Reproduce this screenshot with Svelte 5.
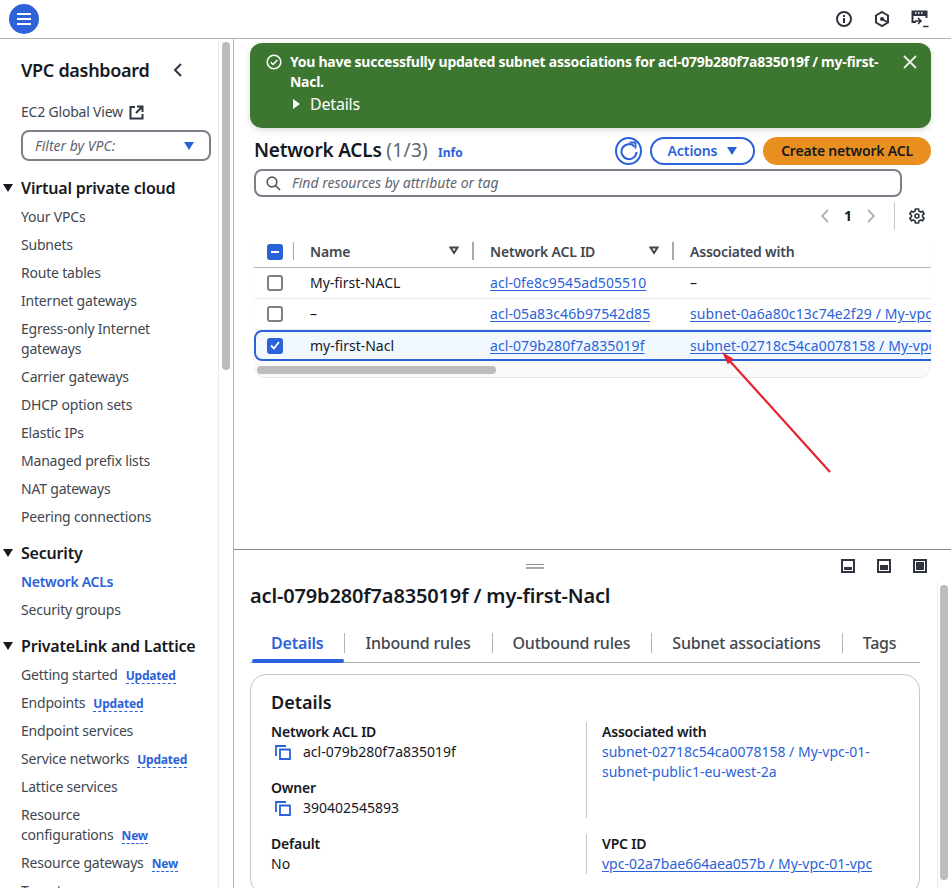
<script>
  const vpc = ['Your VPCs', 'Subnets', 'Route tables', 'Internet gateways', 'Egress-only Internet gateways', 'Carrier gateways', 'DHCP option sets', 'Elastic IPs', 'Managed prefix lists', 'NAT gateways', 'Peering connections'];
  const lattice = [
    { name: 'Getting started', badge: 'Updated' },
    { name: 'Endpoints', badge: 'Updated' },
    { name: 'Endpoint services' },
    { name: 'Service networks', badge: 'Updated' },
    { name: 'Lattice services' },
    { first: 'Resource', name: 'configurations', badge: 'New' },
    { name: 'Resource gateways', badge: 'New' },
    { name: 'Target groups' }
  ];
  const rows = [
    { name: 'My-first-NACL', id: 'acl-0fe8c9545ad505510', assoc: '' },
    { name: '–', id: 'acl-05a83c46b97542d85', assoc: 'subnet-0a6a80c13c74e2f29 / My-vpc-01-subnet-private' },
    { name: 'my-first-Nacl', id: 'acl-079b280f7a835019f', assoc: 'subnet-02718c54ca0078158 / My-vpc-01-subnet-public1', selected: true }
  ];
  const tabs = ['Details', 'Inbound rules', 'Outbound rules', 'Subnet associations', 'Tags'];
</script>

<div class="app">
  <header class="topbar">
    <button class="menu" aria-label="Menu">
      <svg width="16" height="14" viewBox="0 0 16 14"><path d="M1 2h14M1 7h14M1 12h14" stroke="#fff" stroke-width="2"/></svg>
    </button>
    <div class="top-icons">
      <svg width="18" height="18" viewBox="0 0 18 18" fill="none" stroke="#2f3440" stroke-width="2"><circle cx="9" cy="9" r="7"/><path d="M9 8v5M9 5v2"/></svg>
      <svg width="18" height="18" viewBox="0 0 18 18" fill="none" stroke="#2f3440" stroke-width="2"><path d="M9 2l6 3.500v7L9 16l-6-3.500v-7z"/><circle cx="9" cy="9" r="2" fill="#2f3440" stroke="none"/><path d="M9 9l5 3" /></svg>
      <svg width="18" height="18" viewBox="0 0 18 18" fill="none" stroke="#2f3440" stroke-width="2"><path d="M5 12H1.500V1.500h14V8"/><path d="M1 1h15v5H1z" fill="#2f3440" stroke="none"/><path d="M4 3h1.500M7 3h1.500M10 3h1.500" stroke="#fff" stroke-width="1.400"/><path d="M7 8l3 3-3 3M4 11h6M12 16.500h5.500" stroke-width="1.600"/></svg>
    </div>
  </header>

  <div class="body">
    <nav class="sidebar">
      <div class="side-scroll">
        <div class="side-head">
          <h2>VPC dashboard</h2>
          <svg width="12" height="14" viewBox="0 0 12 14" fill="none" stroke="#2f3440" stroke-width="2"><path d="M9 1L3 7l6 6"/></svg>
        </div>
        <div class="global">EC2 Global View
          <svg width="15" height="15" viewBox="0 0 15 15" fill="none" stroke="#2f3440" stroke-width="2"><path d="M6 2H1.500v11.500h12V9M8 1.500h5.500V7M13 2L7 8"/></svg>
        </div>
        <div class="filter"><em>Filter by VPC:</em><span class="caret"></span></div>

        <h3 class="sec"><span class="tri"></span>Virtual private cloud</h3>
        <ul>
          {#each vpc as item}<li>{item}</li>{/each}
        </ul>

        <h3 class="sec"><span class="tri"></span>Security</h3>
        <ul>
          <li class="active">Network ACLs</li>
          <li>Security groups</li>
        </ul>

        <h3 class="sec"><span class="tri"></span>PrivateLink and Lattice</h3>
        <ul>
          {#each lattice as item}
            <li>{#if item.first}{item.first}<br>{/if}{item.name}{#if item.badge}<span class="badge">{item.badge}</span>{/if}</li>
          {/each}
        </ul>
      </div>
      <div class="side-bar"><span></span></div>
    </nav>

    <main class="content">
      <section class="upper">
        <div class="flash">
          <svg class="ok" width="16" height="16" viewBox="0 0 16 16" fill="none" stroke="#fff" stroke-width="1.500"><circle cx="8" cy="8" r="6.800"/><path d="M4.800 8.200l2.300 2.300 4.200-4.500"/></svg>
          <div class="flash-text">
            <strong>You have successfully updated subnet associations for acl-079b280f7a835019f / my-first-Nacl.</strong>
            <div class="flash-details"><span class="tri-r"></span>Details</div>
          </div>
          <svg class="close" width="14" height="14" viewBox="0 0 14 14" stroke="#e9f0e6" stroke-width="1.800"><path d="M1 1l12 12M13 1L1 13"/></svg>
        </div>

        <div class="table-head">
          <h1>Network ACLs <span>(1/3)</span><a class="info" href="#info">Info</a></h1>
          <div class="actions">
            <button class="refresh" aria-label="Refresh">
              <svg width="18" height="20" viewBox="0 0 18 20" fill="none" stroke="#2b62d9" stroke-width="2"><path d="M14.500 5.500A7.500 7.500 0 1 0 16.500 11"/><path d="M9.500 1.500h6v6" stroke-width="1.800"/></svg>
            </button>
            <button class="btn-actions">Actions<span class="caret"></span></button>
            <button class="btn-create">Create network ACL</button>
          </div>
        </div>

        <div class="search">
          <svg width="15" height="15" viewBox="0 0 15 15" fill="none" stroke="#555a63" stroke-width="1.700"><circle cx="6" cy="6" r="4.800"/><path d="M9.500 9.500l4.500 4.500"/></svg>
          <em>Find resources by attribute or tag</em>
        </div>

        <div class="pager">
          <svg width="10" height="14" viewBox="0 0 10 14" fill="none" stroke="#aeb2b8" stroke-width="1.800"><path d="M8 1L2 7l6 6"/></svg>
          <b>1</b>
          <svg width="10" height="14" viewBox="0 0 10 14" fill="none" stroke="#aeb2b8" stroke-width="1.800"><path d="M2 1l6 6-6 6"/></svg>
          <i class="pager-sep"></i>
          <svg width="16" height="16" viewBox="0 0 16 16" fill="none" stroke="#2f3440" stroke-width="1.600"><path d="M6.500 1h3l.4 2 1.700 1 2-.7 1.500 2.600-1.600 1.300v1.600l1.600 1.300-1.500 2.600-2-.7-1.700 1-.4 2h-3l-.4-2-1.700-1-2 .7L.9 10.100l1.600-1.300V7.200L.9 5.900l1.500-2.600 2 .7 1.700-1z"/><circle cx="8" cy="8" r="2"/></svg>
        </div>

        <div class="table">
          <div class="thead row">
            <div class="c-check"><span class="cb on"><svg width="8" height="2" viewBox="0 0 8 2"><path d="M0 1h8" stroke="#fff" stroke-width="2"/></svg></span><i></i></div>
            <div class="c-name">Name
              <svg class="sort" width="10" height="9" viewBox="0 0 10 9" fill="none" stroke="#414750" stroke-width="2"><path d="M1.500 1.500h7L5 7z"/></svg><i></i></div>
            <div class="c-id">Network ACL ID
              <svg class="sort" width="10" height="9" viewBox="0 0 10 9" fill="none" stroke="#414750" stroke-width="2"><path d="M1.500 1.500h7L5 7z"/></svg><i></i></div>
            <div class="c-assoc">Associated with</div>
          </div>
          {#each rows as r}
            <div class="row tr" class:selected={r.selected}>
              <div class="c-check"><span class="cb" class:on={r.selected}>{#if r.selected}<svg width="10" height="9" viewBox="0 0 10 9" fill="none" stroke="#fff" stroke-width="1.800"><path d="M1 4.500l3 3 5-6.500"/></svg>{/if}</span></div>
              <div class="c-name">{r.name}</div>
              <div class="c-id"><a href="#acl">{r.id}</a></div>
              <div class="c-assoc">{#if r.assoc}<a href="#subnet">{r.assoc}</a>{:else}–{/if}</div>
            </div>
          {/each}
          <div class="hscroll"><span></span></div>
        </div>

        <svg class="arrow" width="120" height="130" viewBox="0 0 120 130" fill="none" stroke="#e5232f" stroke-width="2.200"><path d="M112 123L10 10"/><path d="M4 3l11.700 6.900-5.900 5.400z" fill="#e5232f" stroke="none"/></svg>
      </section>

      <section class="lower">
        <div class="split-bar">
          <span class="grip"></span>
          <div class="split-icons">
            <span class="pane p1"></span><span class="pane p2"></span><span class="pane p3"></span>
          </div>
        </div>
        <div class="lower-body">
          <div class="lower-main">
            <h2 class="title">acl-079b280f7a835019f / my-first-Nacl</h2>
            <div class="tabs">
              {#each tabs as t, i}
                <div class="tab" class:current={i === 0}>{t}</div>
              {/each}
            </div>
            <div class="card">
              <h3>Details</h3>
              <div class="grid">
                <div class="col">
                  <div class="field">
                    <div class="label">Network ACL ID</div>
                    <div class="val copy">
                      <svg width="16" height="15" viewBox="0 0 16 15" fill="none" stroke="#2b62d9" stroke-width="1.800"><path d="M1 11V1h10"/><path d="M5 4.500h10v9.500H5z"/></svg>
                      acl-079b280f7a835019f
                    </div>
                  </div>
                  <div class="field">
                    <div class="label">Owner</div>
                    <div class="val copy">
                      <svg width="16" height="15" viewBox="0 0 16 15" fill="none" stroke="#2b62d9" stroke-width="1.800"><path d="M1 11V1h10"/><path d="M5 4.500h10v9.500H5z"/></svg>
                      390402545893
                    </div>
                  </div>
                </div>
                <div class="col ruled">
                  <div class="field">
                    <div class="label">Associated with</div>
                    <div class="val"><span class="blue">subnet-02718c54ca0078158 / My-vpc-01-subnet-public1-eu-west-2a</span></div>
                  </div>
                </div>
                <div class="col">
                  <div class="field">
                    <div class="label">Default</div>
                    <div class="val">No</div>
                  </div>
                </div>
                <div class="col ruled">
                  <div class="field">
                    <div class="label">VPC ID</div>
                    <div class="val"><a href="#vpc">vpc-02a7bae664aea057b / My-vpc-01-vpc</a></div>
                  </div>
                </div>
              </div>
            </div>
          </div>
          <div class="lower-bar"><span></span></div>
        </div>
      </section>
    </main>
  </div>
</div>

<style>
  :global(body) { margin: 0; background: #fff; overflow: hidden; }
  .app {
    width: 951px;
    height: 888px;
    overflow: hidden;
    font-family: "Noto Sans", "Open Sans", sans-serif;
    font-size: 14px;
    line-height: 20px;
    color: #16191f;
    display: flex;
    flex-direction: column;
  }
  a { color: #2b62d9; text-decoration: underline; text-underline-offset: 2px; }
  h1, h2, h3, ul { margin: 0; padding: 0; }
  ul { list-style: none; }
  button { font: inherit; cursor: pointer; }

  .topbar {
    height: 37px;
    flex: none;
    border-bottom: 1px solid #b4b4bb;
    display: flex;
    align-items: center;
    justify-content: space-between;
    padding: 0 22px 1px 9px;
  }
  .menu {
    width: 30px; height: 30px; border-radius: 50%;
    border: 0; padding: 0; background: #2f62d8;
    display: flex; align-items: center; justify-content: center;
  }
  .top-icons { display: flex; gap: 20px; }

  .body { flex: 1; display: flex; min-height: 0; }
  .sidebar {
    width: 233px; flex: none;
    border-right: 1px solid #b4b4bb;
    display: flex;
    overflow: hidden;
  }
  .side-scroll { flex: 1; padding: 19px 0 0 0; min-width: 0; color: #414750; letter-spacing: -0.2px; }
  .side-head {
    display: flex; align-items: center; justify-content: space-between;
    padding: 0 34px 0 21px; height: 24px;
  }
  .side-head h2 { font-size: 18px; font-weight: 600; color: #16191f; line-height: 24px; letter-spacing: -0.3px; }
  .global { display: flex; align-items: center; gap: 6px; padding-left: 21px; margin-top: 20px; }
  .filter {
    margin: 8px 7px 0 21px;
    height: 31px;
    box-sizing: border-box;
    border: 2px solid #7d8089;
    border-radius: 8px;
    display: flex; align-items: center; justify-content: space-between;
    padding: 0 15px 0 12px;
    color: #5f6570;
    letter-spacing: 0;
  }
  .caret {
    width: 0; height: 0;
    border-left: 5px solid transparent; border-right: 5px solid transparent;
    border-top: 8px solid #2b62d9;
  }
  .sec {
    position: relative;
    font-size: 16px; font-weight: 600; line-height: 22px; color: #16191f;
    padding-left: 21px; margin-top: 11px;
    letter-spacing: -0.2px;
  }
  .filter + .sec { margin-top: 16px; }
  .tri {
    position: absolute; left: 3px; top: 7px;
    border-left: 5px solid transparent; border-right: 5px solid transparent;
    border-top: 8px solid #16191f;
  }
  .sidebar ul { margin-top: 4px; }
  .sidebar li { padding: 4px 9px 4px 21px; }
  .sidebar li.active { color: #2b62d9; font-weight: 600; letter-spacing: -0.3px; }
  .badge {
    margin-left: 8px;
    color: #2b62d9; font-size: 12px; font-weight: 700;
    border-bottom: 1px dashed #2b62d9;
    line-height: 14px; display: inline-block;
  }
  .side-bar { width: 14px; flex: none; border-left: 1px solid #e9ebed; }
  .side-bar span { display: block; width: 8px; height: 328px; margin: 3px 0 0 3px; border-radius: 4px; background: #bcbcbc; }

  .content { flex: 1; min-width: 0; display: flex; flex-direction: column; }
  .upper {
    position: relative;
    height: 511px; flex: none;
    border-bottom: 1px solid #87878c;
    padding: 4px 20px 0 16px;
    box-sizing: border-box;
  }
  .flash {
    height: 85px; box-sizing: border-box;
    background: #3d7630; color: #fff;
    border-radius: 12px;
    padding: 9px 14px 0 16px;
    display: flex;
    box-shadow: 0 2px 6px rgba(0,0,0,.15);
  }
  .ok { flex: none; margin: 2px 8px 0 0; }
  .flash-text { flex: 1; }
  .flash-text strong { display: block; font-size: 14px; line-height: 20px; letter-spacing: -0.27px; }
  .flash-details { display: flex; align-items: center; gap: 10px; margin-top: 2px; font-size: 16px; padding-left: 3px; letter-spacing: -0.2px; }
  .tri-r { border-top: 5px solid transparent; border-bottom: 5px solid transparent; border-left: 7px solid #fff; }
  .close { flex: none; margin: 3px 0 0 14px; }

  .table-head { display: flex; align-items: center; justify-content: space-between; height: 28px; margin-top: 9px; padding-left: 4px; }
  .table-head h1 { font-size: 19px; font-weight: 600; line-height: 30px; letter-spacing: -0.2px; }
  .table-head h1 span { font-weight: 400; color: #5f6570; letter-spacing: 0.3px; }
  .info { font-size: 12px; font-weight: 700; margin-left: 10px; text-decoration: none; letter-spacing: 0; }
  .actions { display: flex; align-items: center; gap: 8px; }
  .refresh {
    width: 27px; height: 28px; padding: 0; background: #fff;
    border: 2px solid #2b62d9; border-radius: 50%;
    display: flex; align-items: center; justify-content: center;
  }
  .btn-actions {
    height: 28px; width: 105px; background: #fff; color: #2b62d9; font-weight: 600;
    border: 2px solid #2b62d9; border-radius: 14px;
    display: flex; align-items: center; justify-content: center; gap: 10px; padding: 0;
    letter-spacing: -0.1px;
  }
  .btn-create {
    height: 28px; width: 168px; padding: 0; border: 0; border-radius: 14px;
    background: #e88f1f; color: #16191f; font-weight: 600; letter-spacing: -0.2px;
  }
  .search {
    margin-top: 4px; margin-right: 29px; margin-left: 4px;
    height: 28px; box-sizing: border-box;
    border: 2px solid #7d8089; border-radius: 8px;
    display: flex; align-items: center; gap: 11px; padding: 0 10px;
    color: #5f6570;
  }
  .pager { display: flex; align-items: center; justify-content: flex-end; gap: 14px; height: 30px; margin-top: 4px; padding-right: 6px; }
  .pager b { font-weight: 700; font-size: 14px; }
  .pager-sep { width: 1px; height: 28px; background: #c6c6cd; margin: 0 0 0 4px; }

  .table {
    margin: 5px 0 0 4px;
    border-radius: 0 0 12px 12px;
    overflow: hidden;
    box-shadow: 0 1px 1px rgba(0,0,0,.12);
  }
  .row { display: flex; align-items: center; }
  .row > div { position: relative; height: 100%; display: flex; align-items: center; box-sizing: border-box; white-space: nowrap; }
  .c-check { width: 40px; flex: none; padding-left: 13px; }
  .c-name { width: 180px; flex: none; padding-left: 16px; }
  .c-id { width: 200px; flex: none; padding-left: 16px; }
  .c-assoc { flex: 1; padding-left: 16px; min-width: 0; overflow: hidden; }
  .tr a { letter-spacing: 0.08px; }
  .thead { height: 31px; border-bottom: 1px solid #b4b4bb; font-weight: 600; color: #414750; letter-spacing: -0.2px; }
  .thead i { position: absolute; right: 0; top: 6px; width: 2px; height: 18px; background: #a8a8ae; }
  .thead .c-check i { right: 0; width: 1px; }
  .sort { position: absolute; right: 15px; top: 10px; }
  .tr { height: 31px; border-bottom: 1px solid #e9ebed; box-sizing: border-box; }
  .tr.selected {
    border: 2px solid #2b62d9; border-radius: 8px;
    background: #f1f8ff; margin: 0 -12px 0 0;
  }
  .tr.selected .c-check { padding-left: 11px; width: 38px; }
  .cb {
    width: 16px; height: 16px; box-sizing: border-box;
    border: 2px solid #7d8089; border-radius: 3px;
    display: flex; align-items: center; justify-content: center;
    color: #fff; font-weight: 700;
  }
  .cb.on { background: #2b62d9; border-color: #2b62d9; }
  .hscroll { height: 16px; background: #fafafa; padding-top: 5px; box-sizing: border-box; }
  .hscroll span { display: block; width: 239px; height: 8px; margin-left: 3px; border-radius: 4px; background: #bcbcbc; }
  .arrow { position: absolute; left: 484px; top: 310px; }

  .lower { flex: 1; min-height: 0; display: flex; flex-direction: column; }
  .split-bar { height: 32px; flex: none; position: relative; display: flex; justify-content: flex-end; align-items: center; padding: 0 24px 0 0; }
  .grip {
    position: absolute; left: 292px; top: 14px;
    width: 18px; height: 5px;
    border-top: 1px solid #8d8d94; border-bottom: 2px solid #a8a8ae;
    box-sizing: border-box;
  }
  .split-icons { display: flex; gap: 22px; }
  .pane { width: 14px; height: 14px; box-sizing: border-box; border: 2px solid #2f3440; padding: 1px; display: flex; align-items: flex-end; }
  .pane::after { content: ""; display: block; width: 100%; background: #2f3440; }
  .p1::after { height: 3px; }
  .p2::after { height: 5px; }
  .p3::after { height: 8px; }

  .lower-body { flex: 1; display: flex; min-height: 0; }
  .lower-main { flex: 1; min-width: 0; padding-left: 16px; }
  .title { font-size: 20px; font-weight: 600; line-height: 24px; margin-top: 2px; letter-spacing: -0.15px; white-space: nowrap; }
  .tabs { display: flex; margin-top: 18px; border-bottom: 1px solid #b4b4bb; height: 36px; margin-right: 17px; }
  .tab {
    position: relative; font-size: 16px; font-weight: 500; color: #414750;
    padding: 7px 21px 0; height: 36px; box-sizing: border-box; white-space: nowrap;
    letter-spacing: -0.2px;
  }
  .tab + .tab::before { content: ""; position: absolute; left: 0; top: 7px; width: 1px; height: 20px; background: #b4b4bb; }
  .tab.current { color: #2b62d9; font-weight: 600; }
  .tab.current::after { content: ""; position: absolute; left: 2px; right: 0; bottom: -1px; height: 4px; border-radius: 2px; background: #2b62d9; }
  .card {
    margin: 11px 17px 0 0;
    border: 1px solid #c6c6cd; border-radius: 16px;
    padding: 15px 20px 20px;
  }
  .card h3 { font-size: 18px; font-weight: 600; line-height: 24px; }
  .grid { display: grid; grid-template-columns: 315px 1fr; row-gap: 16px; margin-top: 8px; }
  .col { display: flex; flex-direction: column; gap: 16px; }
  .ruled { border-left: 1px solid #c6c6cd; padding-left: 15px; }
  .label { font-weight: 600; letter-spacing: -0.2px; }
  .val.copy { display: flex; align-items: center; gap: 12px; padding-left: 4px; }
  .blue { color: #2b62d9; }
  .lower-bar { width: 13px; flex: none; border-left: 1px solid #e9ebed; }
  .lower-bar span { display: block; width: 8px; height: 295px; margin: 3px 0 0 2px; border-radius: 4px; background: #bcbcbc; }
</style>
